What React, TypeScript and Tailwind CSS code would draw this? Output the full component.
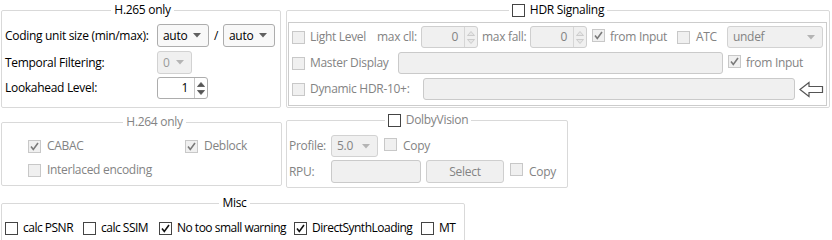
import type { ReactNode } from "react"

function Check({ checked, disabled }: { checked?: boolean; disabled?: boolean }) {
  return (
    <span
      className={`inline-flex w-[13px] h-[13px] shrink-0 items-center justify-center border ${
        disabled ? "border-[#c8c8c8] bg-[#f0f0f0]" : "border-[#444444] bg-white"
      }`}
    >
      {checked && (
        <svg width="11" height="11" viewBox="0 0 11 11">
          <polyline
            points="2,5.5 4.3,8.5 9,2"
            fill="none"
            stroke={disabled ? "#7a7a7a" : "#111111"}
            strokeWidth="1.6"
          />
        </svg>
      )}
    </span>
  )
}

function Arrow({ disabled }: { disabled?: boolean }) {
  return (
    <svg width="8" height="5" viewBox="0 0 8 5" className="shrink-0">
      <polygon points="0,0 8,0 4,4.5" fill={disabled ? "#b4b4b4" : "#606060"} />
    </svg>
  )
}

function Combo({ value, className, disabled }: { value: string; className: string; disabled?: boolean }) {
  return (
    <div
      className={`flex items-center justify-between pl-[5px] pr-[7px] rounded-[3px] border ${
        disabled ? "border-[#d2d2d2] bg-[#f0f0f0] text-[#9a9a9a]" : "border-[#adadad] bg-[#f8f8f8] text-black"
      } ${className}`}
    >
      <span>{value}</span>
      <Arrow disabled={disabled} />
    </div>
  )
}

function Spin({ value, className, disabled }: { value: string; className: string; disabled?: boolean }) {
  const c = disabled ? "#c4c4c4" : "#555555"
  return (
    <div
      className={`flex rounded-[3px] border ${
        disabled ? "border-[#cfcfcf] bg-[#f0f0f0] text-[#838383]" : "border-[#adadad] bg-white text-black"
      } ${className}`}
    >
      <div className="flex-1 flex items-center justify-end pr-[6px]">{value}</div>
      <div
        className={`w-[13px] flex flex-col items-center justify-center gap-[3px] border-l ${
          disabled ? "border-[#d6d6d6]" : "border-[#c8c8c8]"
        }`}
      >
        <svg width="8" height="5" viewBox="0 0 8 5">
          <polygon points="0.5,4.5 7.5,4.5 4,0.5" fill={disabled ? "#e6e6e6" : c} stroke={c} strokeWidth="0.8" />
        </svg>
        <svg width="8" height="5" viewBox="0 0 8 5">
          <polygon points="0.5,0.5 7.5,0.5 4,4.5" fill={disabled ? "#e6e6e6" : c} stroke={c} strokeWidth="0.8" />
        </svg>
      </div>
    </div>
  )
}

function Field({ className }: { className: string }) {
  return <div className={`rounded-[3px] border border-[#cacaca] bg-[#f0f0f0] ${className}`} />
}

function Group({ title, className, children }: { title: ReactNode; className: string; children?: ReactNode }) {
  return (
    <fieldset className={`border border-[#d9d9d9] rounded-[2px] ${className}`}>
      <legend className="mx-auto px-[3px] leading-4 h-4 flex items-center gap-[5px]">{title}</legend>
      {children}
    </fieldset>
  )
}

const dis = "text-[#838383]"

export default function App() {
  return (
    <div className="w-[832px] h-[240px] overflow-hidden bg-white text-[12px] leading-4 tracking-[-0.3px] whitespace-nowrap text-black font-['Open_Sans','Noto_Sans',sans-serif] pt-[2px]">
      {/* row 1 */}
      <div className="flex">
        <Group title="H.265 only" className="ml-[1px] w-[280px] h-[106px] pl-[3px]">
          <div className="flex items-center h-[23px] mt-[6px]">
            <span className="w-[152px]">Coding unit size (min/max):</span>
            <Combo value="auto" className="w-[52px] h-[23px]" />
            <span className="w-[14px] text-center">/</span>
            <Combo value="auto" className="w-[52px] h-[23px]" />
          </div>
          <div className="flex items-center h-[23px] mt-[4px]">
            <span className="w-[152px]">Temporal Filtering:</span>
            <Combo value="0" disabled className="w-[35px] h-[23px]" />
          </div>
          <div className="flex items-center h-[22px] mt-[3px]">
            <span className="w-[152px]">Lookahead Level:</span>
            <Spin value="1" className="w-[51px] h-[22px]" />
          </div>
        </Group>

        <Group
          title={
            <>
              <Check />
              <span>HDR Signaling</span>
            </>
          }
          className="ml-[5px] w-[544px] h-[106px]"
        >
          <div className={`ml-[1px] mt-[4px] w-[539px] h-[84px] border border-[#cccccc] pl-[3px] pt-[3px] ${dis}`}>
            <div className="flex items-center h-[22px]">
              <Check disabled />
              <span className="ml-[5px] w-[67px]">Light Level</span>
              <span className="w-[44px]">max cll:</span>
              <Spin value="0" disabled className="w-[57px] h-[22px]" />
              <span className="ml-[4px] w-[48px]">max fall:</span>
              <Spin value="0" disabled className="w-[57px] h-[22px]" />
              <span className="ml-[5px]">
                <Check checked disabled />
              </span>
              <span className="ml-[5px] w-[67px]">from Input</span>
              <Check disabled />
              <span className="ml-[6px] w-[31px]">ATC</span>
              <Combo value="undef" disabled className="w-[96px] h-[22px] !text-[#838383]" />
            </div>
            <div className="flex items-center h-[22px] mt-[4px]">
              <Check disabled />
              <span className="ml-[5px] w-[88px]">Master Display</span>
              <Field className="w-[325px] h-[22px]" />
              <span className="ml-[5px]">
                <Check checked disabled />
              </span>
              <span className="ml-[5px]">from Input</span>
            </div>
            <div className="flex items-center h-[22px] mt-[4px]">
              <Check disabled />
              <span className="ml-[5px] w-[113px]">Dynamic HDR-10+:</span>
              <Field className="w-[372px] h-[22px]" />
              <svg width="25" height="17" viewBox="0 0 25 17" className="ml-[4px]">
                <polygon
                  points="1,8.5 10,1.5 10,5.5 23.5,5.5 23.5,11.5 10,11.5 10,15.5"
                  fill="white"
                  stroke="#555555"
                  strokeWidth="1.2"
                  strokeLinejoin="miter"
                />
              </svg>
            </div>
          </div>
        </Group>
      </div>

      {/* row 2 */}
      <div className="flex items-start mt-[4px]">
        <Group title={<span className={dis}>H.264 only</span>} className={`ml-[1px] mt-[2px] w-[281px] h-[72px] pl-[26px] ${dis}`}>
          <div className="flex items-center h-4 mt-[8px]">
            <Check checked disabled />
            <span className="ml-[6px] w-[138px]">CABAC</span>
            <Check checked disabled />
            <span className="ml-[6px]">Deblock</span>
          </div>
          <div className="flex items-center h-4 mt-[8px]">
            <Check disabled />
            <span className="ml-[6px]">Interlaced encoding</span>
          </div>
        </Group>

        <Group
          title={
            <>
              <Check />
              <span>DolbyVision</span>
            </>
          }
          className={`ml-[4px] w-[282px] h-[76px] pl-[2px] ${dis}`}
        >
          <div className="flex items-center h-[22px] mt-[7px]">
            <span className="w-[42px]">Profile:</span>
            <Combo value="5.0" disabled className="w-[47px] h-[22px] !text-[#838383]" />
            <span className="ml-[6px]">
              <Check disabled />
            </span>
            <span className="ml-[6px]">Copy</span>
          </div>
          <div className="flex items-center h-[23px] mt-[3px]">
            <span className="w-[42px]">RPU:</span>
            <Field className="w-[90px] h-[23px]" />
            <div className="ml-[5px] w-[78px] h-[23px] flex items-center justify-center rounded-[3px] border border-[#cfcfcf] bg-[#f0f0f0]">
              Select
            </div>
            <span className="ml-[6px]">
              <Check disabled />
            </span>
            <span className="ml-[6px]">Copy</span>
          </div>
        </Group>
      </div>

      {/* row 3 */}
      <div className="flex mt-[7px]">
        <Group title="Misc" className="ml-[1px] w-[464px] h-[60px] pl-[3px]">
          <div className="flex items-center h-4 mt-[9px] tracking-[-0.5px]">
            <div className="w-[78px] flex items-center">
              <Check />
              <span className="ml-[5px]">calc PSNR</span>
            </div>
            <div className="w-[76px] flex items-center">
              <Check />
              <span className="ml-[5px]">calc SSIM</span>
            </div>
            <div className="w-[135px] flex items-center">
              <Check checked />
              <span className="ml-[5px]">No too small warning</span>
            </div>
            <div className="w-[127px] flex items-center">
              <Check checked />
              <span className="ml-[5px]">DirectSynthLoading</span>
            </div>
            <div className="flex items-center">
              <Check />
              <span className="ml-[5px]">MT</span>
            </div>
          </div>
        </Group>
      </div>
    </div>
  )
}
